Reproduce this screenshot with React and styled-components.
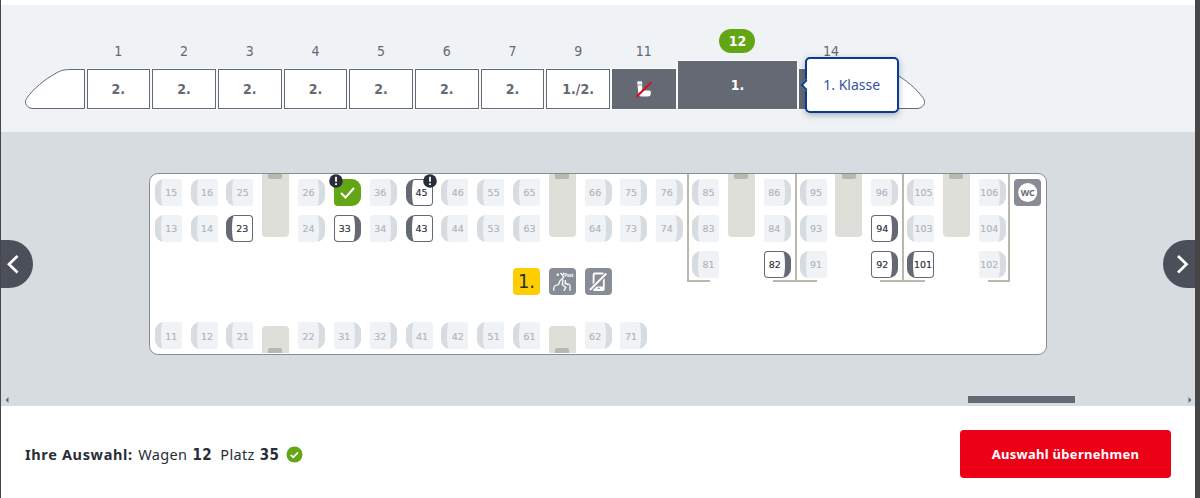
import React from 'react';
import styled, { createGlobalStyle, css } from 'styled-components';

const c = {
  frame: '#464646',
  light: '#eff3f6',
  mid: '#d7dce0',
  grey: '#646973',
  icon: '#878c96',
  ink: '#282d37',
  green: '#63a615',
  red: '#ec0016',
  blue: '#0c3992',
  table: '#dddfd8',
  wall: '#b9b8ad',
};

const words = "'Noto Sans', 'Open Sans', sans-serif";
const digits = "'DejaVu Sans Condensed', 'DejaVu Sans', 'Noto Sans', sans-serif";

const Global = createGlobalStyle`
  *, *::before, *::after { box-sizing: border-box; }
  body { margin: 0; background: #fff; font-family: ${words}; color: ${c.ink}; }
`;

const Page = styled.div`
  position: relative;
  display: flex;
  flex-direction: column;
  width: 1200px;
  height: 498px;
  overflow: hidden;
  border-left: 1px solid ${c.frame};
  border-right: 5px solid ${c.frame};
  padding-top: 5px;
`;

const TrainBand = styled.section`
  height: 127px;
  flex: none;
  background: ${c.light};
  padding: 0 0 23px 23.5px;
  display: flex;
  align-items: flex-end;
  gap: 2px;
`;

const Nose = styled.svg`
  width: 60px;
  height: 40px;
  flex: none;
  display: block;
`;

const Wagon = styled.div`
  position: relative;
  width: ${(p) => (p.$active ? 119.5 : 63.7)}px;
  flex: none;
  display: flex;
  flex-direction: column;
  align-items: center;
  gap: ${(p) => (p.$active ? 8 : 10)}px;
`;

const WagonNumber = styled.span`
  font: 14px/16px ${digits};
  color: ${c.grey};
  ${(p) =>
    p.$active &&
    css`
      background: ${c.green};
      color: #fff;
      font-weight: bold;
      line-height: 24px;
      width: 36px;
      text-align: center;
      border-radius: 12px;
    `}
`;

const WagonBox = styled.div`
  width: 100%;
  height: ${(p) => (p.$active ? 48 : 40)}px;
  display: flex;
  align-items: center;
  justify-content: center;
  border: 1px solid ${c.grey};
  box-shadow: 0 0 0 0.6px #fff;
  background: ${(p) => (p.$dark ? c.grey : '#fff')};
  color: ${(p) => (p.$dark ? '#fff' : c.grey)};
  font: bold 14px/20px ${digits};
`;

const Tooltip = styled.div`
  position: absolute;
  z-index: 2;
  left: 127px;
  bottom: -4px;
  width: 94px;
  height: 56px;
  display: flex;
  align-items: center;
  justify-content: center;
  background: #fff;
  border: 2px solid ${c.blue};
  border-radius: 5px;
  box-shadow: 0 2px 6px rgba(40, 45, 55, 0.35);
  font-size: 14px;
  padding-bottom: 2px;
  color: #3453a0;
  &::before {
    content: '';
    position: absolute;
    left: -5px;
    top: 22px;
    width: 8px;
    height: 8px;
    background: #fff;
    border-left: 2px solid ${c.blue};
    border-bottom: 2px solid ${c.blue};
    transform: rotate(45deg);
  }
`;

const PlanBand = styled.section`
  height: 274px;
  flex: none;
  background: ${c.mid};
  padding: 41px 0 0 148px;
  display: flex;
  flex-direction: column;
  justify-content: space-between;
`;

const Coach = styled.div`
  width: 898px;
  height: 181.5px;
  border: 1px solid ${c.icon};
  border-radius: 9px;
  background: #fff;
  display: grid;
  grid-template-columns: repeat(25, 35.84px);
  grid-template-rows: repeat(10, 17.95px);
`;

const Cell = styled.div`
  grid-column: ${(p) => p.$col + 1} / span 1;
  grid-row: ${(p) => p.$row + 1} / span 2;
  display: flex;
  align-items: center;
  justify-content: center;
  padding: ${(p) => (p.$row === 5 ? 0 : 1)}px 0 0 ${(p) => (p.$col === 24 ? 0 : 0.6)}px;
`;

const SeatBox = styled.div`
  position: relative;
  width: 27px;
  height: 27px;
  display: flex;
  justify-content: ${(p) => (p.$right ? 'flex-start' : 'flex-end')};
  border-radius: ${(p) => (p.$right ? '4px 9px 9px 4px' : '9px 4px 4px 9px')};
  background: ${(p) => (p.$free ? c.grey : c.mid)};
  padding: ${(p) => (p.$free ? 1 : 0)}px;
`;

const Cushion = styled.span`
  width: ${(p) => (p.$free ? 20 : 21)}px;
  height: 100%;
  border-radius: ${(p) => (p.$right ? '3px 2px 2px 3px / 3px 50% 50% 3px' : '2px 3px 3px 2px / 50% 3px 3px 50%')};
  background: ${(p) => (p.$free ? '#fff' : c.light)};
  color: ${(p) => (p.$free ? c.ink : '#b0b4ba')};
  font: 9.5px/1 'DejaVu Sans', sans-serif;
  -webkit-text-stroke: 0.15px currentColor;
  display: flex;
  align-items: center;
  justify-content: center;
  padding-top: 1px;
`;

const Selected = styled.div`
  position: relative;
  width: 27px;
  height: 27px;
  background: ${c.green};
  border-radius: 4px 9px 9px 4px;
  svg { display: block; }
`;

const Alert = styled.svg`
  position: absolute;
  z-index: 1;
  top: -5px;
  left: ${(p) => (p.$right ? 17.5 : -4.5)}px;
`;

const Table = styled.div`
  grid-column: ${(p) => p.$col + 1};
  grid-row: ${(p) => (p.$bottom ? '9 / span 2' : '1 / span 4')};
  justify-self: center;
  align-self: ${(p) => (p.$bottom ? 'end' : 'start')};
  width: 27px;
  height: ${(p) => (p.$bottom ? 27 : 63)}px;
  display: flex;
  justify-content: center;
  align-items: ${(p) => (p.$bottom ? 'flex-end' : 'flex-start')};
  background: ${c.table};
  border-radius: ${(p) => (p.$bottom ? '4px 4px 0 0' : '0 0 4px 4px')};
  &::before {
    content: '';
    width: 14px;
    height: 5px;
    background: ${c.wall};
    border-radius: ${(p) => (p.$bottom ? '2px 2px 0 0' : '0 0 2px 2px')};
  }
`;

const Compartment = styled.div`
  grid-column: ${(p) => p.$col + 1} / span 3;
  grid-row: 1 / span 6;
  border-left: 2px solid ${c.wall};
  border-right: ${(p) => (p.$last ? 2 : 0)}px solid ${c.wall};
  display: flex;
  align-items: flex-end;
  justify-content: space-between;
  &::before, &::after {
    content: '';
    width: 20.5px;
    height: 2px;
    background: ${c.wall};
  }
  &::after { width: ${(p) => (p.$last ? 20 : 22)}px; }
`;

const Pictogram = styled.div`
  width: 27px;
  height: 27px;
  border-radius: 4px;
  background: ${(p) => (p.$yellow ? '#ffcd00' : c.icon)};
  color: ${c.ink};
  font: 20px/27px ${digits};
  text-align: center;
  svg { display: block; }
`;

const ScrollRow = styled.div`
  display: flex;
  align-items: center;
  height: 13px;
  margin-left: -148px;
  padding: 0 3px 0 4px;
  svg { display: block; }
`;

const Thumb = styled.div`
  width: 107px;
  height: 7px;
  margin-left: 959px;
  margin-right: auto;
  background: ${c.grey};
`;

const Pager = styled.button`
  position: absolute;
  top: 239.5px;
  ${(p) => (p.$next ? 'right: 0; border-radius: 24px 0 0 24px;' : 'left: 0; border-radius: 0 24px 24px 0;')}
  width: 32px;
  height: 48px;
  border: 0;
  padding: 0;
  background: #4b4f59;
  svg { display: block; }
`;

const Footer = styled.footer`
  flex: 1;
  display: flex;
  align-items: center;
  justify-content: space-between;
  padding: 4px 24px 0 24px;
`;

const Choice = styled.p`
  margin: 0;
  display: flex;
  align-items: baseline;
  font-size: 14.5px;
  line-height: 20px;
  svg { margin-left: 7px; align-self: center; }
`;

const Label = styled.b`
  letter-spacing: 0.65px;
  margin-right: 5.5px;
`;

const Word = styled.span`
  letter-spacing: 0.35px;
`;

const Num = styled.b`
  font: bold 15px/20px ${digits};
  letter-spacing: 0.3px;
  margin: 0 8.5px 0 5px;
  &:last-of-type { margin-right: 0; }
`;

const Submit = styled.button`
  width: 211px;
  height: 48px;
  border: 0;
  border-radius: 4px;
  background: ${c.red};
  color: #fff;
  font: bold 13px/20px ${words};
  letter-spacing: 0.28px;
`;

const seats = [
  [0, ['15 0 l', '16 1 l', '25 2 l', '26 4 r', '36 6 r', '45 7 l', '46 8 l', '55 9 l', '65 10 l', '66 12 r', '75 13 r', '76 14 r', '85 15 l', '86 17 r', '95 18 l', '96 20 r', '105 21 l', '106 23 r']],
  [2, ['13 0 l', '14 1 l', '23 2 l', '24 4 r', '33 5 r', '34 6 r', '43 7 l', '44 8 l', '53 9 l', '63 10 l', '64 12 r', '73 13 r', '74 14 r', '83 15 l', '84 17 r', '93 18 l', '94 20 r', '103 21 l', '104 23 r']],
  [4, ['81 15 l', '82 17 r', '91 18 l', '92 20 r', '101 21 l', '102 23 r']],
  [8, ['11 0 l', '12 1 l', '21 2 l', '22 4 r', '31 5 r', '32 6 r', '41 7 l', '42 8 l', '51 9 l', '61 10 l', '62 12 r', '71 13 r']],
].flatMap(([row, list]) =>
  list.map((s) => {
    const [no, col, side] = s.split(' ');
    return { no, col: Number(col), row, right: side === 'r' };
  })
);

const free = new Set(['45', '23', '33', '43', '94', '82', '92', '101']);

function AlertBadge({ right }) {
  return (
    <Alert $right={right} width="14" height="14" viewBox="0 0 14 14">
      <circle cx="7" cy="7" r="6.8" fill={c.ink} />
      <path d="M7 2.800v5M7 9.200v1.800" stroke="#fff" strokeWidth="1.800" />
    </Alert>
  );
}

function Seat({ seat }) {
  const isFree = free.has(seat.no);
  return (
    <Cell $col={seat.col} $row={seat.row}>
      <SeatBox $right={seat.right} $free={isFree}>
        <Cushion $right={seat.right} $free={isFree}>{seat.no}</Cushion>
        {seat.no === '45' && <AlertBadge right />}
      </SeatBox>
    </Cell>
  );
}

function TrainEnd({ flip }) {
  return (
    <Nose viewBox="0 0 60 40">
      <path
        transform={flip ? 'matrix(-1 0 0 1 60 0)' : undefined}
        d="M59.5 .5H48C39 .5 36 1.300 31 4.200C19 11 9 19 1.500 29.500C-1.500 34.500 2.500 39.500 8 39.500H59.500Z"
        fill="#fff"
        stroke={c.grey}
      />
    </Nose>
  );
}

function NoSeatIcon() {
  return (
    <svg width="18" height="18" viewBox="0 0 18 18">
      <path d="M2.200 2.500q0-1.200 1.200-1.200h2.800q1 0 1 1.200L7.200 10.500H14q1.800 0 1.800 1.200v1.800q0 3-3 3H6.500q-2.500 0-3-2.500Z" fill="#fff" />
      <path d="M2.200 5h5" stroke={c.grey} strokeWidth=".7" />
      <path d="M1 17.200L16.700 2" stroke={c.grey} strokeWidth="2" />
      <path d="M1.500 16.800L16.500 2.200" stroke={c.red} strokeWidth="1.700" />
    </svg>
  );
}

const wagons = [
  ['1', '2.'], ['2', '2.'], ['3', '2.'], ['4', '2.'], ['5', '2.'], ['6', '2.'],
  ['7', '2.'], ['9', '1./2.'], ['11', null], ['12', '1.'], ['14', ''],
];

export default function App() {
  return (
    <>
      <Global />
      <Page>
        <TrainBand>
          <TrainEnd />
          {wagons.map(([no, label]) => {
            const active = no === '12';
            return (
              <Wagon key={no} $active={active}>
                <WagonNumber $active={active}>{no}</WagonNumber>
                <WagonBox $active={active} $dark={Number(no) > 10}>
                  {label === null ? <NoSeatIcon /> : label}
                </WagonBox>
                {active && <Tooltip>1. Klasse</Tooltip>}
              </Wagon>
            );
          })}
          <TrainEnd flip />
        </TrainBand>

        <PlanBand>
          <Coach>
            {[15, 18, 21].map((col) => (
              <Compartment key={col} $col={col} $last={col === 21} />
            ))}
            {[3, 11, 16, 19, 22].map((col) => <Table key={col} $col={col} />)}
            {[3, 11].map((col) => <Table key={col} $col={col} $bottom />)}
            {seats.map((s) => <Seat key={s.no} seat={s} />)}
            <Cell $col={5} $row={0}>
              <Selected>
                <svg width="27" height="27" viewBox="0 0 27 27">
                  <path d="M7 14l4.500 4.500L20 9" fill="none" stroke="#fff" strokeWidth="2" />
                </svg>
                <AlertBadge />
              </Selected>
            </Cell>
            <Cell $col={10} $row={5}>
              <Pictogram $yellow>1.</Pictogram>
            </Cell>
            <Cell $col={11} $row={5}>
              <Pictogram>
                <svg width="27" height="27" viewBox="0 0 27 27">
                  <g fill="none" stroke="#fff" strokeWidth="1.300">
                    <path d="M4.800 22.800C4.500 19.500 5 18 6.500 17.500L9.500 16.500L11 12.800L14.500 9.500L13.500 7L11.500 5" />
                    <path d="M14 7L15 4.800" />
                    <path d="M14.200 11.500L13.200 16.500L16.800 19.500L14.800 22.800" />
                    <path d="M16.500 12L16 16M16.500 16.500C17 15 18 15.200 18.500 16.500C19.500 15.500 21 16.500 21 18V22.800" />
                  </g>
                  <circle cx="8.800" cy="6.800" r="1.200" fill="#fff" />
                  <text x="15.300" y="8.500" fontSize="4.500" fontWeight="bold" fontFamily="Noto Sans" fill="#fff">Psst</text>
                </svg>
              </Pictogram>
            </Cell>
            <Cell $col={12} $row={5}>
              <Pictogram>
                <svg width="27" height="27" viewBox="0 0 27 27">
                  <rect x="8.600" y="5.500" width="10.200" height="16.700" rx="1.300" fill="none" stroke="#fff" strokeWidth="1.800" />
                  <path d="M8.500 18.500h10.300v3.500h-10.300Z" fill="#fff" />
                  <path d="M12.500 20.300h2.500" stroke={c.icon} strokeWidth="1" />
                  <path d="M5 22L21.500 5.500" stroke={c.icon} strokeWidth="4" />
                  <path d="M5 21.800L21.300 5.500" stroke="#fff" strokeWidth="1.900" />
                </svg>
              </Pictogram>
            </Cell>
            <Cell $col={24} $row={0}>
              <Pictogram>
                <svg width="27" height="27" viewBox="0 0 27 27">
                  <circle cx="13.700" cy="13.500" r="9.500" fill="#fff" />
                  <text x="13.700" y="16.700" textAnchor="middle" fontSize="8.800" fontWeight="bold" fontFamily="Noto Sans" fill={c.grey}>WC</text>
                </svg>
              </Pictogram>
            </Cell>
          </Coach>
          <ScrollRow>
            <svg width="4" height="6" viewBox="0 0 4 6"><path d="M3.500 0v6L.5 3Z" fill={c.grey} /></svg>
            <Thumb />
            <svg width="4" height="6" viewBox="0 0 4 6"><path d="M.5 0v6l3-3Z" fill={c.grey} /></svg>
          </ScrollRow>
        </PlanBand>

        <Footer>
          <Choice>
            <Label>Ihre Auswahl:</Label>
            <Word>Wagen</Word>
            <Num>12</Num>
            <Word>Platz</Word>
            <Num>35</Num>
            <svg width="17" height="17" viewBox="0 0 17 17">
              <circle cx="8.500" cy="8.500" r="8" fill={c.green} />
              <path d="M4.800 8.800l2.500 2.500 4.800-5" fill="none" stroke="#fff" strokeWidth="1.800" />
            </svg>
          </Choice>
          <Submit>Auswahl übernehmen</Submit>
        </Footer>

        <Pager aria-label="Zurück">
          <svg width="32" height="48" viewBox="0 0 32 48">
            <path d="M16.500 16L8 24.300L16.500 32.500" fill="none" stroke="#fff" strokeWidth="2.700" />
          </svg>
        </Pager>
        <Pager $next aria-label="Weiter">
          <svg width="32" height="48" viewBox="0 0 32 48">
            <path d="M15 16L23.500 24.300L15 32.500" fill="none" stroke="#fff" strokeWidth="2.700" />
          </svg>
        </Pager>
      </Page>
    </>
  );
}
